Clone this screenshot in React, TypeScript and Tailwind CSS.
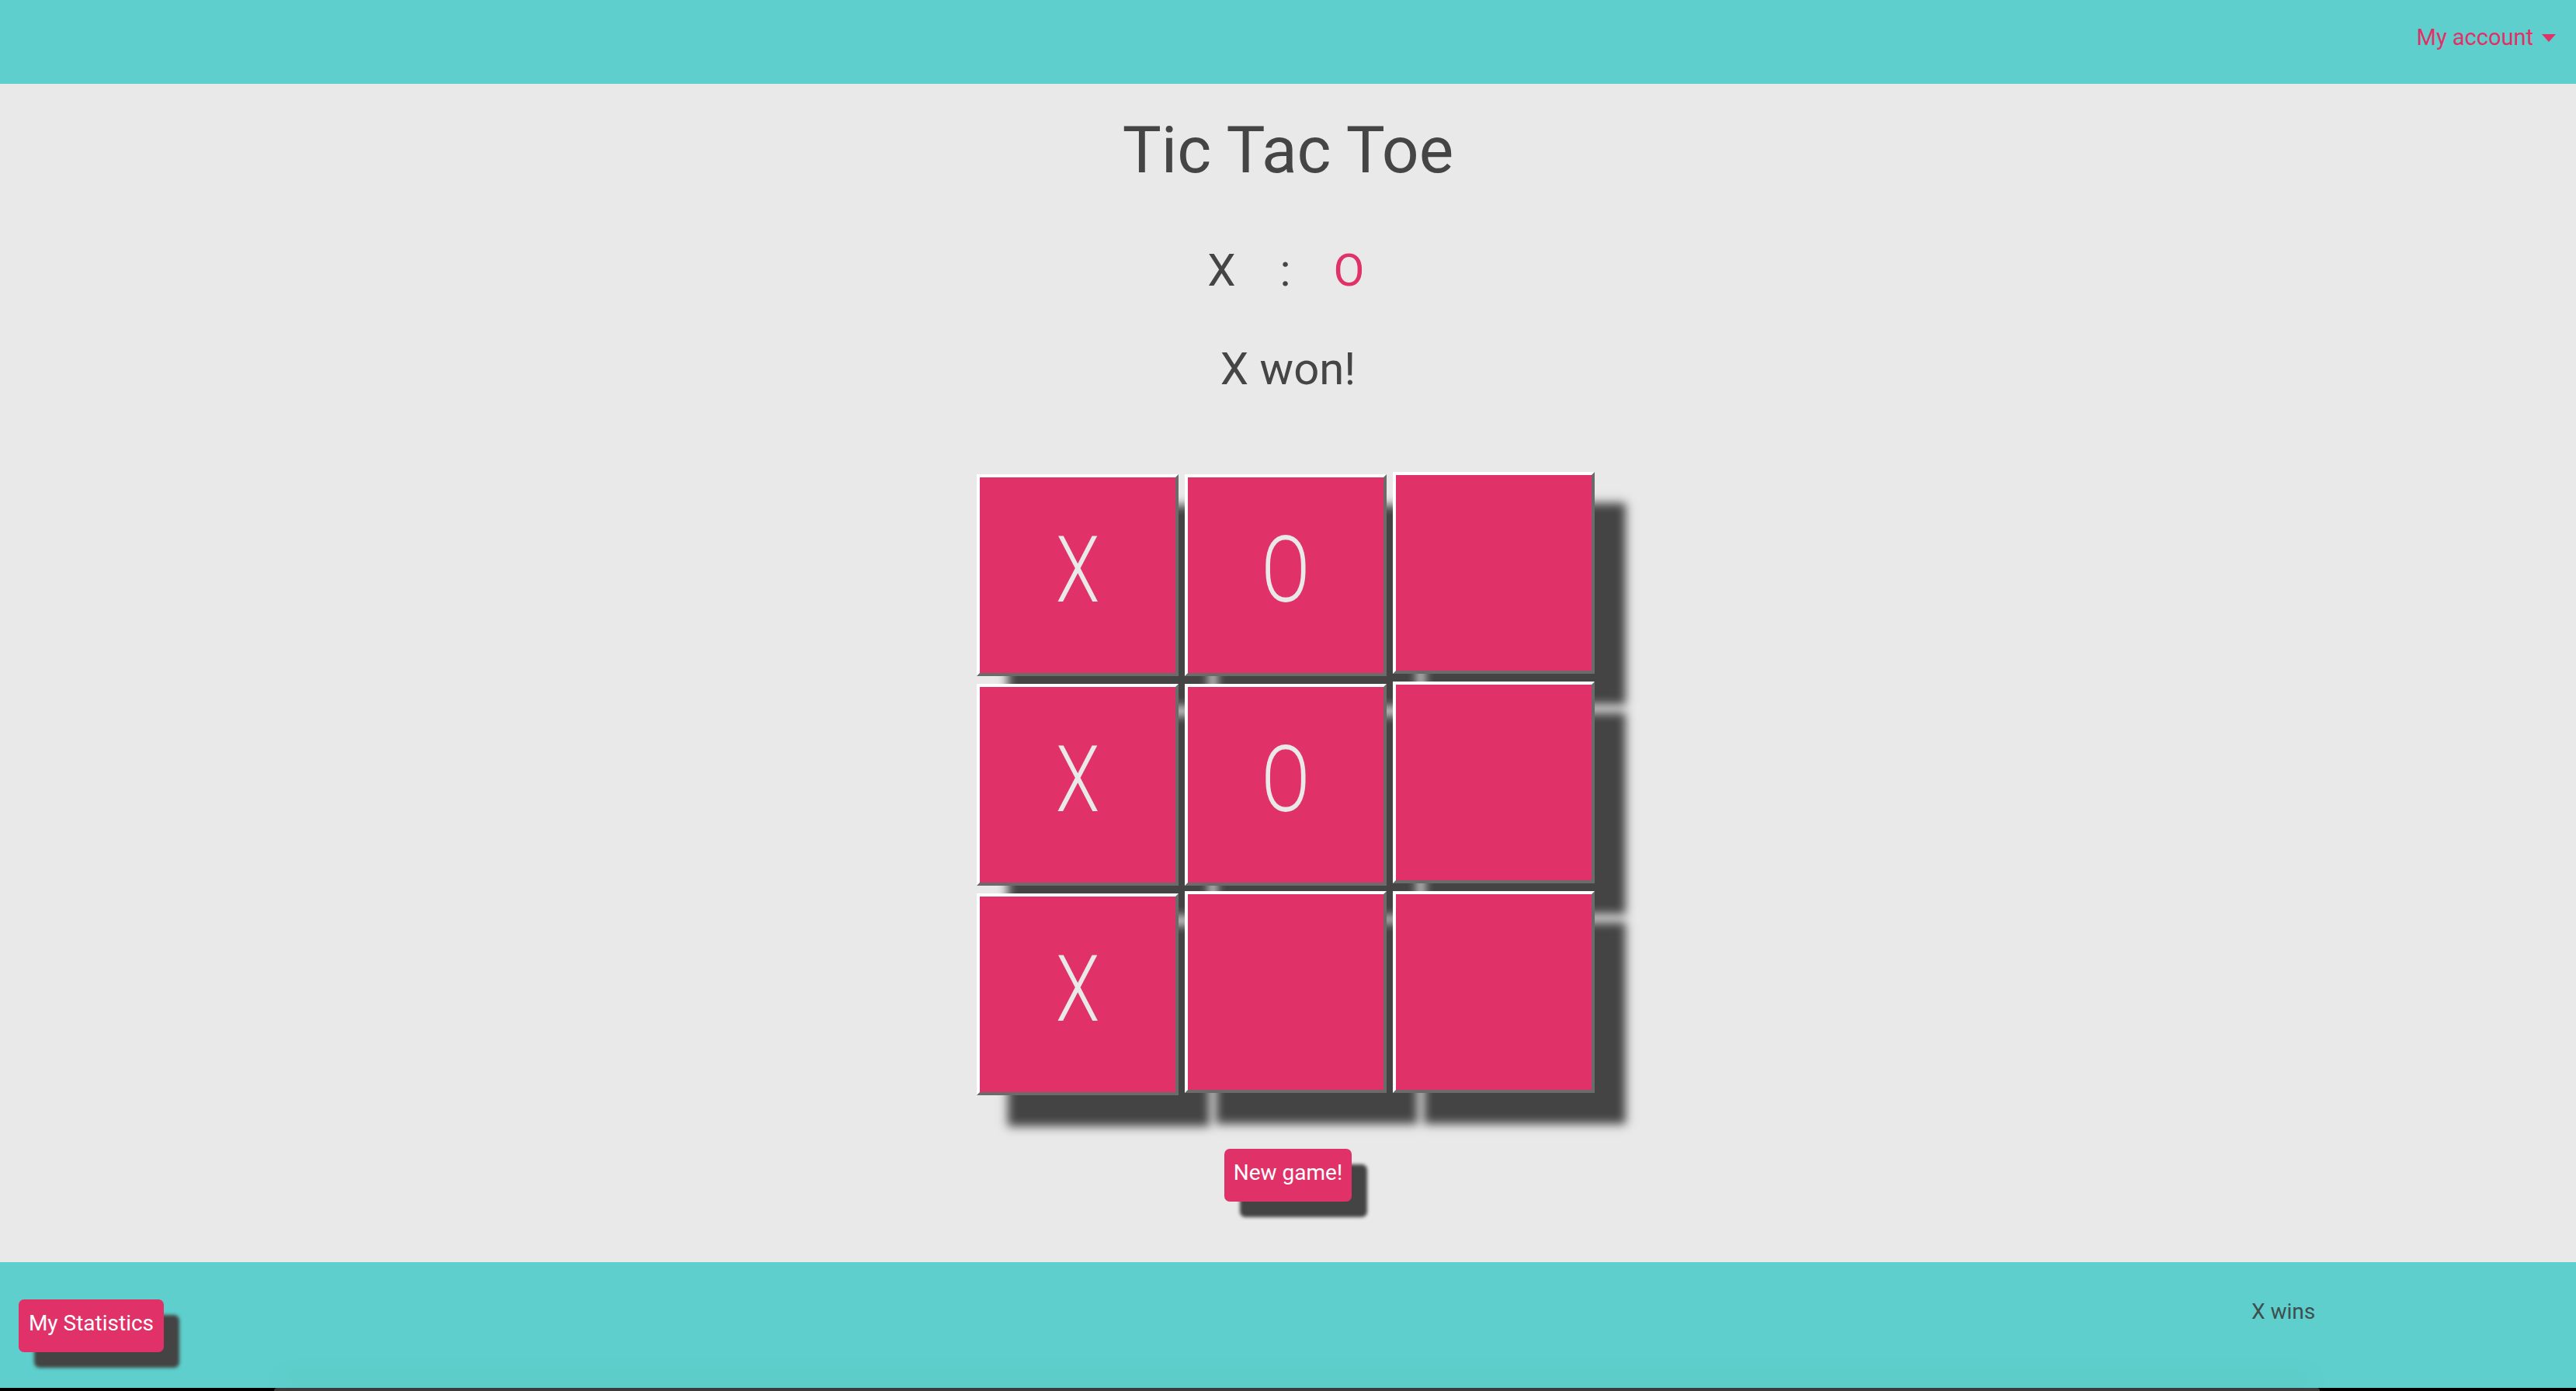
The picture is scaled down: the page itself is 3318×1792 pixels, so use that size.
const board: string[][] = [
  ["X", "O", ""],
  ["X", "O", ""],
  ["X", "", ""],
];

function Cell({ value }: { value: string }) {
  return (
    <div
      className={`w-[260px] h-[260px] flex items-center justify-center pb-[13px] bg-[#e03168] border-4 border-t-white border-l-white border-b-[#6b6b6b] border-r-[#6b6b6b] shadow-[40px_40px_12px_#444] ${
        value ? "mt-[3px]" : ""
      }`}
    >
      {value && (
        <span className="text-[118px] leading-none font-light text-[#e9e9e9] scale-x-[0.78]">{value}</span>
      )}
    </div>
  );
}

export default function App() {
  return (
    <div className="w-full min-h-screen bg-[#e9e9e9] text-[#454545] font-['Roboto','Liberation_Sans',sans-serif] overflow-hidden">
      <header className="h-[108px] bg-[#5ecfcc] flex justify-end items-center pr-[26px] pb-[10px]">
        <div className="flex items-center text-[29px] text-[#e03168]">
          <span>My account</span>
          <span className="ml-[11px] w-0 h-0 border-x-[9px] border-t-[10px] border-x-transparent border-t-[#e03168]" />
        </div>
      </header>

      <main className="h-[1518px] flex flex-col items-center">
        <h1 className="mt-[44px] text-[84px] leading-none">Tic Tac Toe</h1>

        <div className="mt-[83px] mr-[7px] flex text-[58px] leading-none">
          <span className="w-[82px] text-center">X</span>
          <span className="w-[82px] text-center">:</span>
          <span className="w-[82px] text-center text-[#e03168]">O</span>
        </div>

        <p className="mt-[69px] text-[58px] leading-none">X won!</p>

        <div className="mt-[104px] mr-[6px] flex flex-col gap-[10px]">
          {board.map((row, r) => (
            <div key={r} className="h-[260px] flex items-start gap-[8px]">
              {row.map((v, c) => (
                <Cell key={c} value={v} />
              ))}
            </div>
          ))}
        </div>

        <button className="mt-[72px] w-[164px] h-[68px] pb-[6px] flex items-center justify-center rounded-[7px] bg-[#e03168] text-white text-[28px] leading-none shadow-[20px_20px_4px_#444]">
          New game!
        </button>
      </main>

      <footer className="bg-[#5ecfcc]">
        <div className="h-[162px] flex items-start">
          <button className="ml-[24px] mt-[48px] w-[187px] h-[68px] pb-[6px] flex items-center justify-center rounded-[7px] bg-[#e03168] text-white text-[28px] leading-none shadow-[20px_20px_4px_#444]">
            My Statistics
          </button>
          <div className="flex-1" />
          <p className="w-[418px] mt-[50px] text-[28px] leading-none text-[#3d4f4e]">X wins</p>
        </div>
        <div className="h-[4px] bg-black flex">
          <div className="ml-[353px] w-[2635px] h-full bg-[#3a3a3a] rounded-t-[6px] shadow-[0_-12px_40px_rgba(0,0,0,0.12)]" />
        </div>
      </footer>
    </div>
  );
}
